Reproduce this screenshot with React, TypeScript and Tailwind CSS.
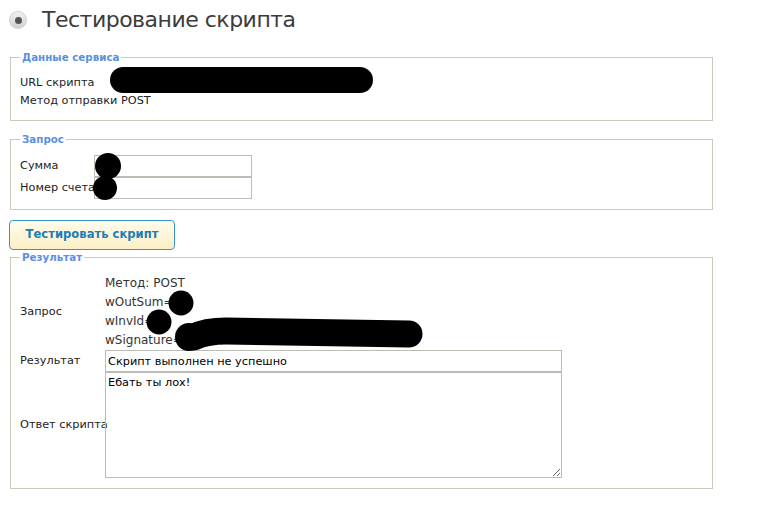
import type { ReactNode } from "react";

const font = { fontFamily: '"DejaVu Sans", Verdana, sans-serif' };

function Box({ title, children, className = "" }: { title: string; children: ReactNode; className?: string }) {
  return (
    <fieldset className={`ml-[10px] w-[703px] border border-[#cbc9b8] px-[9px] ${className}`}>
      <legend className="px-[2px] text-[10.3px] leading-[14px] font-bold text-[#5c8fe2]">{title}</legend>
      {children}
    </fieldset>
  );
}

function Redactions() {
  return (
    <svg className="pointer-events-none absolute left-0 top-0" width="761" height="512">
      <line x1="123" y1="80" x2="360" y2="80" stroke="#000" strokeWidth="26" strokeLinecap="round" />
      <circle cx="108" cy="166" r="13" fill="#000" />
      <circle cx="105" cy="188" r="12" fill="#000" />
      <circle cx="181" cy="303" r="12.5" fill="#000" />
      <circle cx="159" cy="322" r="12.5" fill="#000" />
      <path d="M194 337 Q 206 331 226 331 L 409 334" stroke="#000" strokeWidth="27" strokeLinecap="round" fill="none" />
      <circle cx="189" cy="337" r="14" fill="#000" />
    </svg>
  );
}

export default function App() {
  return (
    <div className="relative h-[512px] w-[761px] bg-white text-[11.3px] text-[#222]" style={font}>
      <div className="flex h-[40px] items-center pl-[9px]">
        <span className="flex h-[18px] w-[18px] items-center justify-center rounded-full border border-[#cfcfcf] bg-gradient-to-b from-[#f2f2f2] to-[#d0d0d0]">
          <span className="h-[7px] w-[7px] rounded-full bg-[#555]" />
        </span>
        <h1 className="ml-[15px] text-[22px] leading-[30px] font-normal tracking-[-0.5px] text-[#3c3c3c]">
          Тестирование скрипта
        </h1>
      </div>

      <Box title="Данные сервиса" className="mt-[10px] pt-[10px] pb-[10px]">
        <div className="leading-[18px]">URL скрипта</div>
        <div className="leading-[18px]">Метод отправки POST</div>
      </Box>

      <Box title="Запрос" className="mt-[11px] pt-[9px] pb-[10px]">
        <div className="flex h-[22px] items-center">
          <span className="w-[74px]">Сумма</span>
          <input className="h-[22px] w-[158px] border border-[#bdbcb4] px-[2px] text-[11.3px] outline-none" />
        </div>
        <div className="flex h-[22px] items-center">
          <span className="w-[74px] whitespace-nowrap">Номер счета</span>
          <input className="h-[22px] w-[158px] border border-[#bdbcb4] px-[2px] text-[11.3px] outline-none" />
        </div>
      </Box>

      <button className="mt-[10px] ml-[9px] h-[30px] w-[166px] rounded-[4px] border border-[#3596c8] bg-gradient-to-b from-[#fffcec] to-[#fbefc6] text-[11.6px] font-bold text-[#1d7db5]">
        Тестировать скрипт
      </button>

      <Box title="Результат" className="pt-[10px] pb-[10px]">
        <div className="flex items-center">
          <span className="w-[85px]">Запрос</span>
          <div className="text-[12px] leading-[19px] text-[#333]">
            <div>Метод: POST</div>
            <div>wOutSum=</div>
            <div>wInvId=</div>
            <div>wSignature=</div>
          </div>
        </div>
        <div className="flex h-[22px] items-center">
          <span className="w-[85px]">Результат</span>
          <input
            readOnly
            value="Скрипт выполнен не успешно"
            className="h-[22px] w-[457px] border border-[#bdbcb4] px-[2px] text-[11.3px] text-black outline-none"
          />
        </div>
        <div className="flex items-center">
          <span className="w-[85px] whitespace-nowrap">Ответ скрипта</span>
          <textarea
            readOnly
            value="Ебать ты лох!"
            className="block h-[106px] w-[457px] border border-[#bdbcb4] px-[2px] py-[2px] text-[11.3px] text-black outline-none"
          />
        </div>
      </Box>

      <Redactions />
    </div>
  );
}
